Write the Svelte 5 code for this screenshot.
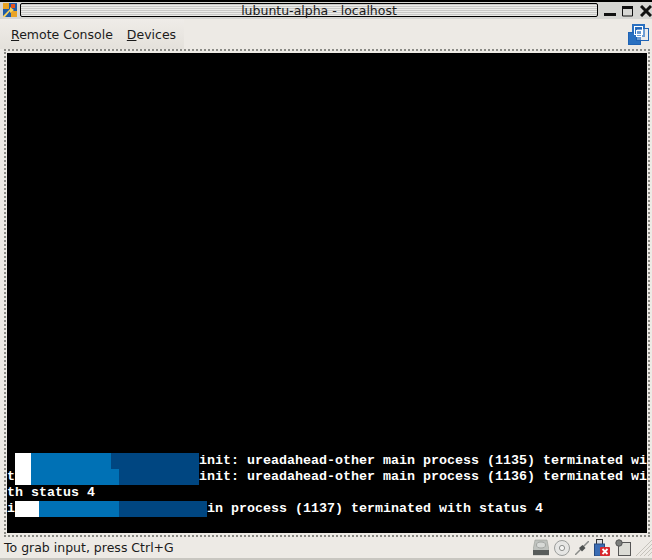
<script>
  const lines = [
    { id: 1, parts: [['', 1], ['w', 2], ['b', 10], ['d', 11]], text: 'init: ureadahead-other main process (1135) terminated wi' },
    { id: 2, parts: [['t', 1], ['w', 2], ['b', 11], ['d', 10]], text: 'init: ureadahead-other main process (1136) terminated wi' },
    { id: 3, parts: [], text: 'th status 4' },
    { id: 4, parts: [['i', 1], ['w', 3], ['b', 10], ['d', 11]], text: 'in process (1137) terminated with status 4' }
  ];
</script>

<div class="window">
  <header class="titlebar">
    <svg class="logo" width="14" height="14" viewBox="0 0 14 14">
      <rect width="14" height="14" fill="#1d5aa6" />
      <path d="M0 0H6V6H0ZM8 8H14V14H8Z" fill="#e9a324" />
      <path d="M0 13 L7 6 L7 4 L11 7 L7 10 L7 8 L2 14 H0Z" fill="#f8d25a" />
      <rect x="8" y="1" width="4" height="4" fill="#e5531d" />
    </svg>
    <div class="title"><span>lubuntu-alpha - localhost</span></div>
    <div class="controls">
      <svg width="12" height="12" viewBox="0 0 12 12"><rect x="0" y="8" width="12" height="3" fill="#111" /></svg>
      <svg width="12" height="12" viewBox="0 0 12 12"><path d="M.5 1.5h10v9.5H.5z" fill="none" stroke="#111" /><rect x="0" y="1" width="11" height="3" fill="#111" /></svg>
      <svg width="12" height="12" viewBox="0 0 12 12"><path d="M1 1 L11 11 M11 1 L1 11" stroke="#111" stroke-width="3" /></svg>
    </div>
  </header>

  <nav class="menubar">
    <div class="menus">
      <span class="menu"><u>R</u>emote Console</span>
      <span class="menu"><u>D</u>evices</span>
    </div>
    <svg class="vm-logo" width="21" height="21" viewBox="0 0 21 21">
      <rect x="4.5" y="0.5" width="12" height="12" fill="#2a70c0" stroke="#2a70c0" />
      <rect x="0.5" y="8.5" width="12" height="12" fill="#2a70c0" stroke="#1f63b5" />
      <rect x="8.5" y="4.5" width="12" height="12" fill="#eef2f8" fill-opacity=".35" stroke="#1f63b5" />
      <rect x="6.5" y="2.5" width="8" height="8" fill="none" stroke="#fff" />
      <rect x="8.5" y="6.5" width="5" height="6" fill="none" stroke="#fff" />
    </svg>
  </nav>

  <main class="frame">
    <div class="console">
      {#each lines as line (line.id)}
        <div class="line">
          {#each line.parts as [kind, cells]}
            <span class="cell {kind === 'w' ? 'white' : kind === 'b' ? 'blue' : kind === 'd' ? 'dark' : ''}" style="width:{cells * 8}px">{kind === 'w' || kind === 'b' || kind === 'd' ? '' : kind}</span>
          {/each}
          <span class="txt">{line.text}</span>
        </div>
      {/each}
    </div>
  </main>

  <footer class="statusbar">
    <span class="hint">To grab input, press Ctrl+G</span>
    <div class="icons">
      <svg width="16" height="17" viewBox="0 0 16 17">
        <path d="M2 1h12l2 10v5H0v-5z" fill="#bfc2be" stroke="#9a9d99" stroke-width=".6" />
        <rect x="0" y="11" width="16" height="5" fill="#585c5b" />
        <ellipse cx="8" cy="6" rx="4.5" ry="3" fill="#d8dad7" stroke="#a2a5a2" />
      </svg>
      <svg width="16" height="16" viewBox="0 0 16 16">
        <circle cx="8" cy="8" r="7.5" fill="#e6e6e4" stroke="#9b9d9b" />
        <circle cx="8" cy="8" r="2.6" fill="#f5f5f3" stroke="#8f918f" />
      </svg>
      <svg width="14" height="14" viewBox="0 0 14 14">
        <path d="M0 14 L14 0" stroke="#8a8c8a" stroke-width="1.5" />
        <path d="M4 7 L7.5 4 L10.5 7 L7 10.5 Z" fill="#4e5150" />
      </svg>
      <svg width="16" height="17" viewBox="0 0 16 17">
        <rect x="2.5" y="0.5" width="6" height="5" fill="#d8dade" stroke="#333" />
        <rect x="0.5" y="5" width="10" height="12" fill="#3a6cb4" stroke="#26487e" />
        <rect x="6" y="8" width="10" height="9" rx="1" fill="#d7262c" />
        <path d="M8.5 10 L13.5 15 M13.5 10 L8.5 15" stroke="#fff" stroke-width="1.8" />
      </svg>
      <svg width="16" height="17" viewBox="0 0 16 17">
        <rect x="3.5" y="3.5" width="12" height="13" fill="#dcdcd6" stroke="#555" />
        <circle cx="4" cy="4" r="3.2" fill="#7b7e7c" stroke="#555" />
      </svg>
      <svg class="grip" width="16" height="16" viewBox="0 0 16 16">
        <path d="M0 16L16 0M4 16L16 4M8 16L16 8M12 16L16 12" stroke="#c6c3bc" stroke-width="1" />
      </svg>
    </div>
  </footer>
</div>

<style>
  :global(body) { margin: 0; background: #edeae5; }
  .window {
    width: 652px;
    height: 560px;
    display: flex;
    flex-direction: column;
    overflow: hidden;
    background: #edeae5;
    font-family: "DejaVu Sans", sans-serif;
    color: #1b1b1b;
  }
  .titlebar {
    height: 19px;
    flex: none;
    box-sizing: border-box;
    padding-top: 3px;
    display: flex;
    align-items: flex-start;
    background: linear-gradient(#000 0 2px, #d6d6d3 2px);
  }
  .logo { margin: 0 3px 0 3px; flex: none; }
  .title {
    width: 578px;
    height: 14px;
    box-sizing: border-box;
    flex: none;
    border: 1px solid #000;
    border-radius: 2px;
    background: repeating-linear-gradient(#c9c9c7 0 1px, #ebebe9 1px 2px);
    display: flex;
    justify-content: center;
    align-items: center;
    font-size: 12.5px;
    color: #1a1a1a;
  }
  .title span { position: relative; left: 10px; }
  .controls {
    margin-left: 6px;
    display: flex;
    gap: 6px;
    margin-top: 2px;
  }
  .menubar {
    height: 30px;
    flex: none;
    display: flex;
    justify-content: space-between;
    align-items: center;
    background: #edeae5;
  }
  .menus {
    width: 184px;
    height: 30px;
    box-sizing: border-box;
    padding: 1px 0 0 11px;
    display: flex;
    align-items: center;
    gap: 14px;
    font-size: 12.5px;
    background: linear-gradient(#efece8, #e4e1db);
  }
  .vm-logo { margin-right: 3px; }
  .frame {
    flex: none;
    margin-left: 4px;
    width: 646px;
    height: 488px;
    box-sizing: border-box;
    border: 2px dotted #8b8b86;
    padding: 2px 1px;
  }
  .console {
    width: 640px;
    height: 480px;
    background: #000;
    box-sizing: border-box;
    padding-bottom: 16px;
    display: flex;
    flex-direction: column;
    justify-content: flex-end;
    overflow: hidden;
    font-family: "Liberation Mono", monospace;
    font-weight: 700;
    font-size: 13.33px;
    color: #fff;
  }
  .line {
    display: flex;
    height: 16px;
    line-height: 16px;
    white-space: pre;
  }
  .cell { display: block; height: 16px; flex: none; }
  .white { background: #fff; }
  .blue { background: #0071b5; }
  .dark { background: #004681; }
  .statusbar {
    flex: none;
    height: 23px;
    box-sizing: border-box;
    padding: 0 0 0 4px;
    display: flex;
    justify-content: space-between;
    align-items: center;
    font-size: 12.5px;
    border-bottom: 2px solid #c8c6c0;
  }
  .icons { display: flex; align-items: center; gap: 5px; }
  .grip { align-self: flex-end; }
</style>
